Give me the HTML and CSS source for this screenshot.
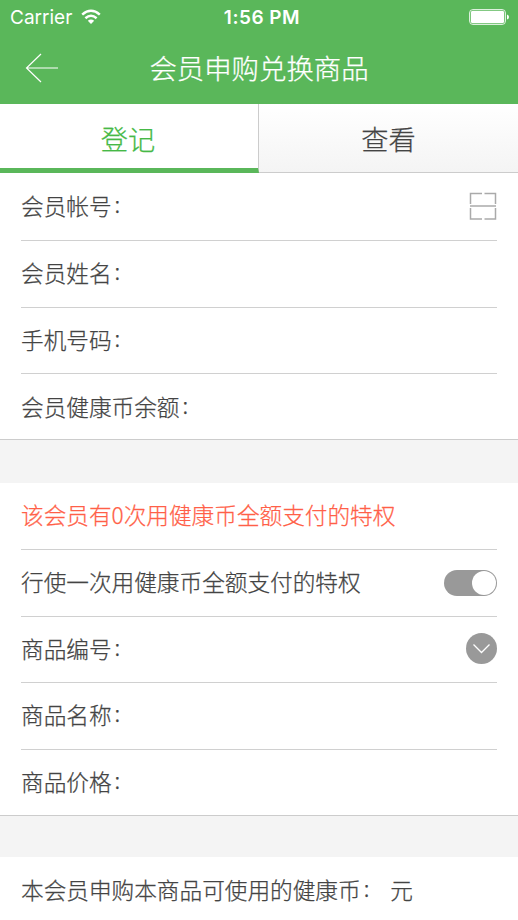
FILE: index.html
```html
<!DOCTYPE html>
<html lang="zh-CN">
<head>
    <meta charset="UTF-8">
    <meta name="viewport" content="width=device-width, initial-scale=1">
    <title>会员申购兑换商品</title>
    <link rel="stylesheet" href="styles.css">
</head>
<body>
    <header class="header">
        <div class="status">
            <div class="carrier">
                <span>Carrier</span>
                <svg class="wifi" viewBox="0 0 20 16" width="20" height="16">
                    <path d="M1.2 5.6 Q10 -2 18.8 5.6" />
                    <path d="M4.4 9.2 Q10 4.4 15.6 9.2" />
                    <path class="dot" d="M6.8 11.8 Q10 9 13.2 11.8 L10 15 Z" />
                </svg>
            </div>
            <div class="time">1:56 PM</div>
            <svg class="battery" viewBox="0 0 41 17" width="41" height="17">
                <rect x="0.5" y="0.5" width="36" height="15" rx="3.5" fill="none" stroke="#fff" stroke-width="0.8" />
                <rect x="1.8" y="1.8" width="33.4" height="12.4" rx="2" fill="#fff" />
                <path d="M38 5.5 Q40 6 40 8 Q40 10 38 10.5 Z" fill="#fff" />
            </svg>
        </div>
        <div class="nav">
            <svg class="back" viewBox="0 0 34 30" width="34" height="30">
                <path d="M33 15 H1.5 M16 1 L1.5 15 L16 29" />
            </svg>
            <h1>会员申购兑换商品</h1>
        </div>
    </header>
    <div class="tabs">
        <div class="tab active">登记</div>
        <div class="tab">查看</div>
    </div>
    <div class="group first">
        <div class="row">
            <label>会员帐号<i>:</i></label>
            <svg class="scan" viewBox="0 0 28 28" width="28" height="28">
                <path d="M13 1.5 H1.5 V12 M15.5 1.5 H26.5 V12 M1.5 16 V27 H13 M26.5 16 V27 H15.5 M1 14 H27" />
            </svg>
        </div>
        <div class="row"><label>会员姓名<i>:</i></label></div>
        <div class="row"><label>手机号码<i>:</i></label></div>
        <div class="row"><label>会员健康币余额<i>:</i></label></div>
    </div>
    <div class="group second">
        <div class="row notice"><label>该会员有0次用健康币全额支付的特权</label></div>
        <div class="row">
            <label>行使一次用健康币全额支付的特权</label>
            <span class="switch"></span>
        </div>
        <div class="row">
            <label>商品编号<i>:</i></label>
            <svg class="more" viewBox="0 0 31 31" width="31" height="31">
                <circle cx="15.5" cy="15.5" r="15.5" />
                <path d="M7.5 11.5 L15.5 19.5 L23.5 11.5" />
            </svg>
        </div>
        <div class="row"><label>商品名称<i>:</i></label></div>
        <div class="row"><label>商品价格<i>:</i></label></div>
    </div>
    <div class="group third">
        <div class="row"><label>本会员申购本商品可使用的健康币<i>:</i></label><span class="unit">元</span></div>
    </div>
</body>
</html>
```
FILE: styles.css
```css
* {box-sizing: border-box;}
body {margin: 0; height: 920px; overflow: hidden; background: #f4f4f4; color: #444; font-family: "Noto Sans CJK SC", sans-serif; font-weight: 300; -webkit-text-stroke: 0.25px;}
.header {height: 104px; background: #5ab75a; color: #fff;}
.status {display: grid; grid-template-columns: 1fr 1fr 1fr; align-items: center; height: 34px; padding: 0 8px 0 10px; font-family: Inter, sans-serif; font-size: 19px; font-weight: 400; -webkit-text-stroke: 0;}
.carrier {display: flex; align-items: center; gap: 9px;}
.wifi {fill: none; stroke: #fff; stroke-width: 2.5;}
.wifi .dot {fill: #fff; stroke: none;}
.time {padding-left: 4px; font-weight: 600; letter-spacing: 0.5px; text-align: center;}
.battery {justify-self: end;}
.nav {display: grid; grid-template-columns: 34px 1fr 34px; align-items: center; height: 68px; padding: 0 25px;}
.back {fill: none; stroke: #fff; stroke-width: 1.2;}
h1 {margin: -2px 0 0; font-size: 27.4px; line-height: 68px; font-weight: 300; text-align: center;}
.tabs {display: flex; height: 69px;}
.tab {flex: 1; border-bottom: 1px solid #ccc; background: linear-gradient(#fff, #f4f4f4); font-size: 27.2px; line-height: 68px; text-align: center;}
.tab.active {flex: none; width: 259px; padding-right: 2px; border-right: 1px solid #ccc; border-bottom: 5px solid #5ab75a; background: #fff; color: #46b946;}
.group {padding: 0 21px; background: #fff;}
.first {height: 267px; margin-bottom: 43px; border-bottom: 1px solid #ccc;}
.second {height: 333px; margin-bottom: 41px; border-bottom: 1px solid #ccc;}
.row {display: flex; align-items: center; justify-content: space-between; height: 66.5px; border-bottom: 1px solid #d0d0d0; font-size: 22.65px;}
.row label, .unit {margin-top: -2px;}
.first .row:first-child {height: 68px; padding-bottom: 1px;}
.second .row:first-child {height: 67px; padding-bottom: 1px;}
.row:last-child {border-bottom: none;}
.row i {margin-left: 3px; font-style: normal; line-height: 0; vertical-align: 2px;}
.notice {color: #ff5f48;}
.scan {fill: none; stroke: #aaa; stroke-width: 1.5;}
.switch {width: 53px; height: 26px; padding: 1px; border-radius: 13px; background: #999;}
.switch::after {content: ""; display: block; width: 24px; height: 24px; margin-left: auto; border-radius: 50%; background: #fff;}
.more {margin-top: -1px; fill: #999;}
.more path {fill: none; stroke: #fff; stroke-width: 1.3;}
.third .row {justify-content: flex-start;}
.unit {margin-left: 21px;}
```
